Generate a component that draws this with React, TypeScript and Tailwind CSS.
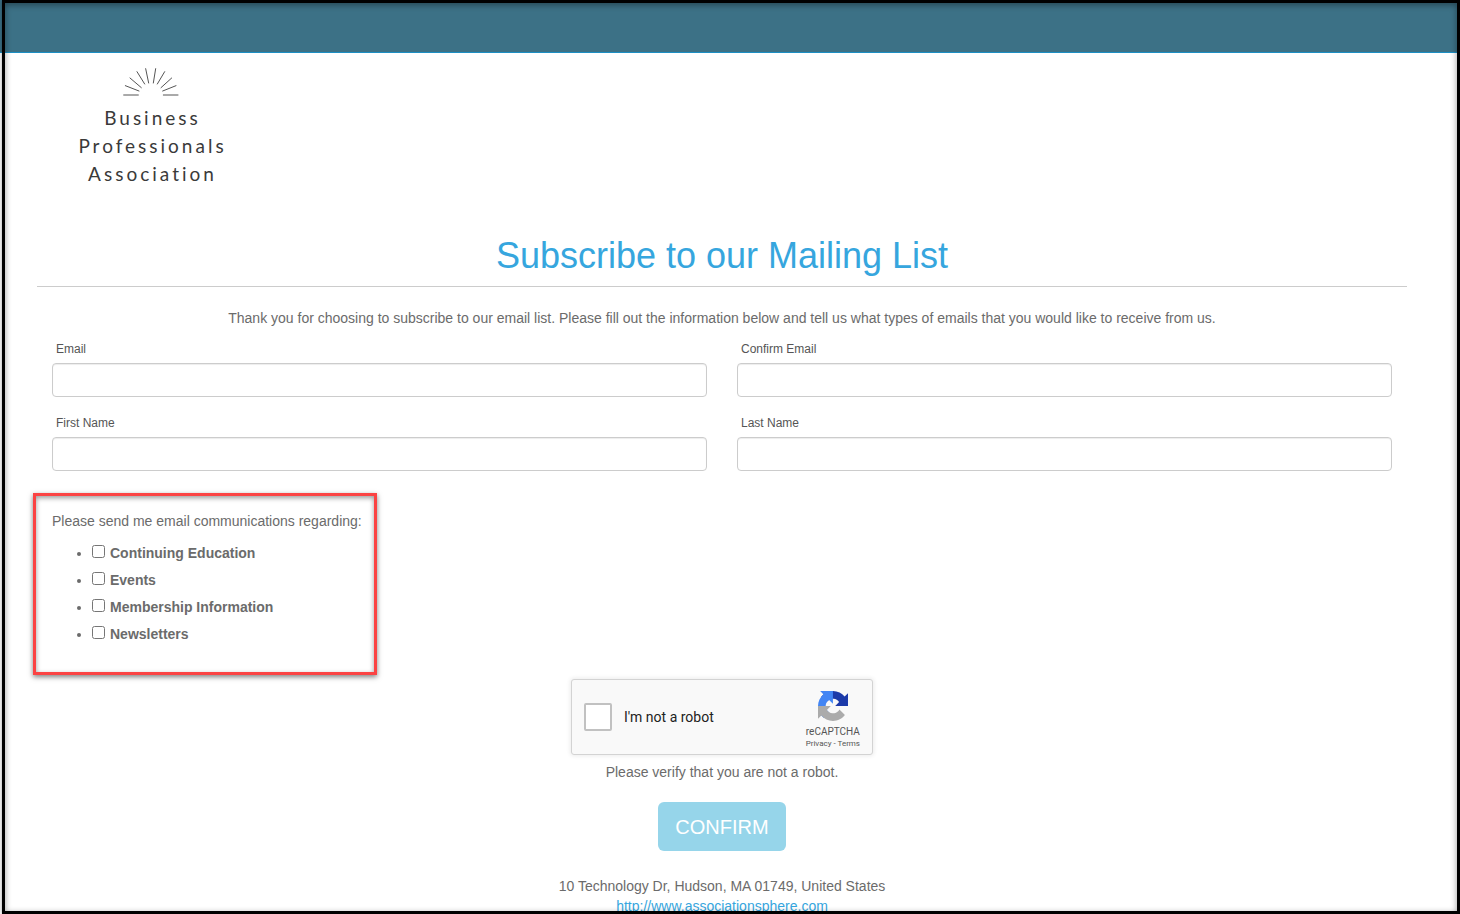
import React, { useState } from 'react'

interface Field {
  id: string
  label: string
  type: string
}

const fields: Field[] = [
  { id: 'email', label: 'Email', type: 'email' },
  { id: 'confirm-email', label: 'Confirm Email', type: 'email' },
  { id: 'first-name', label: 'First Name', type: 'text' },
  { id: 'last-name', label: 'Last Name', type: 'text' },
]

const topics = ['Continuing Education', 'Events', 'Membership Information', 'Newsletters']

const Logo: React.FC = () => (
  <div className="flex w-[228px] flex-col items-center pt-[14px]">
    <svg
      className="h-[31px] w-[58px]"
      viewBox="366 200 174 93"
      stroke="#555555"
      strokeWidth="3"
      strokeLinecap="round"
      aria-hidden="true"
    >
      <path d="M371 284H415M376 256L417 272M390 233L424 262M411 214L434 251M437 205L446 248" />
      <path d="M534 284H490M528 256L488 272M515 233L483 262M494 214L472 251M467 205L460 248" />
    </svg>
    <div className="mt-[6px] pl-[3px] text-center font-['Lato',sans-serif] text-[19px] leading-[28px] tracking-[3px] text-[#3a3a3a]">
      <div>Business</div>
      <div>Professionals</div>
      <div>Association</div>
    </div>
  </div>
)

const RecaptchaLogo: React.FC = () => (
  <svg className="size-[30px]" viewBox="0 0 64 64" aria-hidden="true">
    <path
      fill="#1c3aa9"
      d="M64 31.955l-.033-1.37V4.687l-7.16 7.16C50.948 4.674 42.033.093 32.05.093c-10.4 0-19.622 4.96-25.458 12.64l11.736 11.86a15.55 15.55 0 0 1 4.754-5.334c2.05-1.6 4.952-2.906 8.968-2.906.485 0 .86.057 1.135.163 4.976.393 9.288 3.14 11.828 7.124l-8.307 8.307L64 31.953"
    />
    <path
      fill="#4285f4"
      d="M31.862.094l-1.37.033H4.594l7.16 7.16C4.58 13.147 0 22.06 0 32.046c0 10.4 4.96 19.622 12.64 25.458L24.5 45.768a15.55 15.55 0 0 1-5.334-4.754c-1.6-2.05-2.906-4.952-2.906-8.968 0-.485.057-.86.163-1.135.393-4.976 3.14-9.288 7.124-11.828l8.307 8.307L31.86.095"
    />
    <path
      fill="#ababab"
      d="M.001 32.045l.033 1.37v25.898l7.16-7.16c5.86 7.173 14.774 11.754 24.76 11.754 10.4 0 19.622-4.96 25.458-12.64l-11.736-11.86a15.55 15.55 0 0 1-4.754 5.334c-2.05 1.6-4.952 2.906-8.968 2.906-.485 0-.86-.057-1.135-.163-4.976-.393-9.288-3.14-11.828-7.124l8.307-8.307c-10.522.04-22.4.066-27.295-.005"
    />
  </svg>
)

const Recaptcha: React.FC = () => (
  <div className="flex h-[76px] w-[302px] items-center justify-between rounded-[3px] border border-[#d3d3d3] bg-[#f9f9f9] px-3 font-['Roboto',sans-serif] shadow-[0_0_4px_1px_rgba(0,0,0,0.08)]">
    <label className="flex items-center gap-3 text-sm text-[#222222]">
      <input
        type="checkbox"
        className="size-7 appearance-none rounded-[2px] border-2 border-[#c1c1c1] bg-white checked:bg-[#4285f4]"
      />
      I'm not a robot
    </label>
    <div className="flex flex-col items-center pt-[7px] text-[#555555]">
      <RecaptchaLogo />
      <span className="mt-[5px] text-[10px] leading-[12px]">reCAPTCHA</span>
      <span className="text-[8px] leading-[12px]">
        <a href="#privacy">Privacy</a> - <a href="#terms">Terms</a>
      </span>
    </div>
  </div>
)

const App: React.FC = () => {
  const [selected, setSelected] = useState<string[]>([])

  const toggleTopic = (topic: string) => {
    setSelected(prev => (prev.includes(topic) ? prev.filter(t => t !== topic) : [...prev, topic]))
  }

  return (
    <div className="h-screen overflow-hidden bg-white font-['Liberation_Sans',Arial,sans-serif] text-sm leading-5 text-[#6b6b6b]">
      <header className="h-[53px] border-b border-[#1c8fc4] bg-[#3c7186]" />

      <main className="pr-[53px] pl-[37px]">
        <Logo />

        <h1 className="mt-12 border-b border-[#cccccc] pb-[10px] text-center text-[36px] leading-[40px] text-[#36a6de]">
          Subscribe to our Mailing List
        </h1>

        <form onSubmit={e => e.preventDefault()}>
          <p className="mt-[21px] text-center">
            Thank you for choosing to subscribe to our email list. Please fill out the information below and tell us
            what types of emails that you would like to receive from us.
          </p>

          <div className="mt-[11px] grid grid-cols-2 gap-x-[30px] gap-y-4 px-[15px]">
            {fields.map(field => (
              <div key={field.id}>
                <label htmlFor={field.id} className="mb-1 block pl-1 text-xs leading-5 text-[#555555]">
                  {field.label}
                </label>
                <input
                  id={field.id}
                  type={field.type}
                  className="block h-[34px] w-full rounded-[4px] border border-[#cccccc] bg-white px-3 shadow-[inset_0_1px_1px_rgba(0,0,0,0.075)]"
                />
              </div>
            ))}
          </div>

          {/* Topic preferences */}
          <fieldset className="mt-[22px] -ml-1 h-[182px] w-[344px] border-3 border-[#fb4343] pt-[15px] pl-4 shadow-[0_2px_5px_rgba(0,0,0,0.5),inset_0_2px_5px_rgba(0,0,0,0.4)]">
            <p className="whitespace-nowrap">Please send me email communications regarding:</p>
            <ul className="mt-3 list-disc space-y-[7px] pl-10 font-bold">
              {topics.map(topic => (
                <li key={topic}>
                  <label>
                    <input
                      type="checkbox"
                      className="mr-[5px] size-[13px]"
                      checked={selected.includes(topic)}
                      onChange={() => toggleTopic(topic)}
                    />
                    {topic}
                  </label>
                </li>
              ))}
            </ul>
          </fieldset>

          <div className="mt-1 flex flex-col items-center">
            <Recaptcha />
            <p className="mt-[7px]">Please verify that you are not a robot.</p>
            <button type="submit" className="mt-5 h-[49px] rounded-[6px] bg-[#96d5ea] px-[17px] text-xl text-white">
              CONFIRM
            </button>
          </div>
        </form>

        <footer className="mt-[25px] text-center">
          <div>10 Technology Dr, Hudson, MA 01749, United States</div>
          <a href="http://www.associationsphere.com" className="text-[#36a6de] underline">
            http://www.associationsphere.com
          </a>
        </footer>
      </main>

      {/* Window frame */}
      <div className="pointer-events-none fixed inset-y-0 right-0 left-0.5 border-3 border-black shadow-[0_0_4px_rgba(0,0,0,0.4),inset_0_2px_6px_rgba(0,0,0,0.4)]" />
    </div>
  )
}

export default App
